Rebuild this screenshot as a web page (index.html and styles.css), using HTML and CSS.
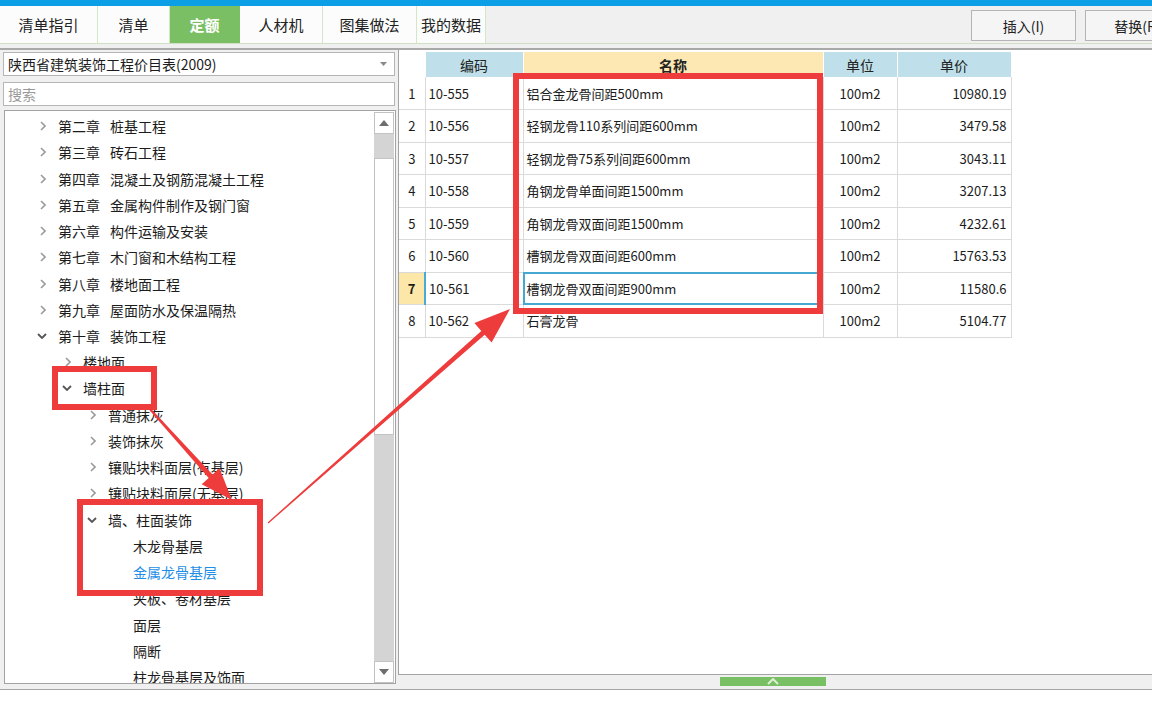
FILE: index.html
```html
<!DOCTYPE html>
<html lang="zh-CN">
<head>
<meta charset="utf-8">
<title>定额</title>
<link rel="stylesheet" href="styles.css">
</head>
<body>
<div class="app">
  <div class="topstrip"></div>
  <div class="tabbar">
    <div class="tabs">
      <div class="tab w1">清单指引</div>
      <div class="tab w2">清单</div>
      <div class="tab w3 active">定额</div>
      <div class="tab w4">人材机</div>
      <div class="tab w5">图集做法</div>
      <div class="tab w6">我的数据</div>
    </div>
    <div class="actions">
      <button class="btn">插入(I)</button>
      <button class="btn">替换(R)</button>
    </div>
  </div>
  <div class="sep"></div>
  <div class="main">
    <div class="left">
      <div class="select">
        <span class="select-text">陕西省建筑装饰工程价目表(2009)</span>
        <svg class="caret" width="7" height="4" viewBox="0 0 7 4"><polygon points="0,0 7,0 3.5,4" fill="#8a8a8a"/></svg>
      </div>
      <div class="search">搜索</div>
      <div class="tree">
        <div class="nodes">
          <div class="node l1"><span class="tw"><svg class="cc" width="6" height="10" viewBox="0 0 6 10"><polyline points="1,1 5,5 1,9"/></svg></span><span class="ch">第二章</span>桩基工程</div>
          <div class="node l1"><span class="tw"><svg class="cc" width="6" height="10" viewBox="0 0 6 10"><polyline points="1,1 5,5 1,9"/></svg></span><span class="ch">第三章</span>砖石工程</div>
          <div class="node l1"><span class="tw"><svg class="cc" width="6" height="10" viewBox="0 0 6 10"><polyline points="1,1 5,5 1,9"/></svg></span><span class="ch">第四章</span>混凝土及钢筋混凝土工程</div>
          <div class="node l1"><span class="tw"><svg class="cc" width="6" height="10" viewBox="0 0 6 10"><polyline points="1,1 5,5 1,9"/></svg></span><span class="ch">第五章</span>金属构件制作及钢门窗</div>
          <div class="node l1"><span class="tw"><svg class="cc" width="6" height="10" viewBox="0 0 6 10"><polyline points="1,1 5,5 1,9"/></svg></span><span class="ch">第六章</span>构件运输及安装</div>
          <div class="node l1"><span class="tw"><svg class="cc" width="6" height="10" viewBox="0 0 6 10"><polyline points="1,1 5,5 1,9"/></svg></span><span class="ch">第七章</span>木门窗和木结构工程</div>
          <div class="node l1"><span class="tw"><svg class="cc" width="6" height="10" viewBox="0 0 6 10"><polyline points="1,1 5,5 1,9"/></svg></span><span class="ch">第八章</span>楼地面工程</div>
          <div class="node l1"><span class="tw"><svg class="cc" width="6" height="10" viewBox="0 0 6 10"><polyline points="1,1 5,5 1,9"/></svg></span><span class="ch">第九章</span>屋面防水及保温隔热</div>
          <div class="node l1"><span class="tw"><svg class="ce" width="10" height="6" viewBox="0 0 10 6"><polyline points="1,1 5,5 9,1"/></svg></span><span class="ch">第十章</span>装饰工程</div>
          <div class="node l2"><span class="tw"><svg class="cc" width="6" height="10" viewBox="0 0 6 10"><polyline points="1,1 5,5 1,9"/></svg></span>楼地面</div>
          <div class="node l2"><span class="tw"><svg class="ce" width="10" height="6" viewBox="0 0 10 6"><polyline points="1,1 5,5 9,1"/></svg></span>墙柱面</div>
          <div class="node l3"><span class="tw"><svg class="cc" width="6" height="10" viewBox="0 0 6 10"><polyline points="1,1 5,5 1,9"/></svg></span>普通抹灰</div>
          <div class="node l3"><span class="tw"><svg class="cc" width="6" height="10" viewBox="0 0 6 10"><polyline points="1,1 5,5 1,9"/></svg></span>装饰抹灰</div>
          <div class="node l3"><span class="tw"><svg class="cc" width="6" height="10" viewBox="0 0 6 10"><polyline points="1,1 5,5 1,9"/></svg></span>镶贴块料面层(有基层)</div>
          <div class="node l3"><span class="tw"><svg class="cc" width="6" height="10" viewBox="0 0 6 10"><polyline points="1,1 5,5 1,9"/></svg></span>镶贴块料面层(无基层)</div>
          <div class="node l3"><span class="tw"><svg class="ce" width="10" height="6" viewBox="0 0 10 6"><polyline points="1,1 5,5 9,1"/></svg></span>墙、柱面装饰</div>
          <div class="node l4"><span class="tw"></span>木龙骨基层</div>
          <div class="node l4 sel"><span class="tw"></span>金属龙骨基层</div>
          <div class="node l4"><span class="tw"></span>夹板、卷材基层</div>
          <div class="node l4"><span class="tw"></span>面层</div>
          <div class="node l4"><span class="tw"></span>隔断</div>
          <div class="node l4"><span class="tw"></span>柱龙骨基层及饰面</div>
        </div>
        <div class="vscroll">
          <div class="sbtn"><svg width="10" height="6" viewBox="0 0 10 6"><polygon points="0,6 10,6 5,0" fill="#6e6e6e"/></svg></div>
          <div class="track t1"></div>
          <div class="thumb"></div>
          <div class="track t2"></div>
          <div class="sbtn"><svg width="10" height="6" viewBox="0 0 10 6"><polygon points="0,0 10,0 5,6" fill="#6e6e6e"/></svg></div>
        </div>
      </div>
    </div>
    <div class="right">
      <div class="gridwrap">
        <table class="grid">
          <colgroup><col class="c0"><col class="c1"><col class="c2"><col class="c3"><col class="c4"></colgroup>
          <thead>
            <tr><th class="hn"></th><th class="hb">编码</th><th class="hy">名称</th><th class="hb">单位</th><th class="hb">单价</th></tr>
          </thead>
          <tbody>
            <tr><td class="rn">1</td><td class="code">10-555</td><td class="name">铝合金龙骨间距500mm</td><td class="unit">100m2</td><td class="price">10980.19</td></tr>
            <tr><td class="rn">2</td><td class="code">10-556</td><td class="name">轻钢龙骨110系列间距600mm</td><td class="unit">100m2</td><td class="price">3479.58</td></tr>
            <tr><td class="rn">3</td><td class="code">10-557</td><td class="name">轻钢龙骨75系列间距600mm</td><td class="unit">100m2</td><td class="price">3043.11</td></tr>
            <tr><td class="rn">4</td><td class="code">10-558</td><td class="name">角钢龙骨单面间距1500mm</td><td class="unit">100m2</td><td class="price">3207.13</td></tr>
            <tr><td class="rn">5</td><td class="code">10-559</td><td class="name">角钢龙骨双面间距1500mm</td><td class="unit">100m2</td><td class="price">4232.61</td></tr>
            <tr><td class="rn">6</td><td class="code">10-560</td><td class="name">槽钢龙骨双面间距600mm</td><td class="unit">100m2</td><td class="price">15763.53</td></tr>
            <tr class="current"><td class="rn">7</td><td class="code">10-561</td><td class="name cursor">槽钢龙骨双面间距900mm</td><td class="unit">100m2</td><td class="price">11580.6</td></tr>
            <tr><td class="rn">8</td><td class="code">10-562</td><td class="name">石膏龙骨</td><td class="unit">100m2</td><td class="price">5104.77</td></tr>
          </tbody>
        </table>
      </div>
      <div class="handlebar">
        <div class="handle"><svg width="12" height="7" viewBox="0 0 12 7"><polyline points="1,6 6,1 11,6" fill="none" stroke="#dff0d6" stroke-width="2"/></svg></div>
      </div>
    </div>
  </div>
  <svg class="annot" width="1152" height="726" viewBox="0 0 1152 726">
    <g fill="none" stroke="#ee3b3b" stroke-width="6">
      <rect x="516" y="76" width="304" height="235"/>
      <rect x="55" y="369" width="99" height="38"/>
      <rect x="80" y="502" width="180" height="91"/>
    </g>
    <g fill="#ee3b3b">
      <polygon points="147.3,407.7 208.7,478.0 201.7,484.3 232,500 219.5,468.3 212.5,474.6 148.7,406.3"/>
      <polygon points="267.6,522.5 481.3,331.0 474.4,323.1 510,309 491.6,342.6 484.7,334.7 268.4,523.5"/>
    </g>
  </svg>
</div>
</body>
</html>
```

FILE: styles.css
```css
* { box-sizing: border-box; }
html, body { margin: 0; padding: 0; }
body {
  width: 1152px;
  height: 726px;
  overflow: hidden;
  background: #ffffff;
  font-family: "Noto Sans CJK SC", "Noto Sans", sans-serif;
  color: #1c1c1c;
}
.app { position: relative; width: 1152px; height: 726px; }

.topstrip { height: 6px; background: #0c9fe6; }

.tabbar {
  height: 38px;
  display: flex;
  background: #f0f0f0;
  border-bottom: 1px solid #cfe0c6;
  overflow: hidden;
}
.tabs { display: flex; height: 100%; }
.tab {
  height: 100%;
  display: flex;
  align-items: center;
  justify-content: center;
  font-size: 15px;
  background: #fcfcfc;
  border-right: 1px solid #d3e7c7;
  color: #222;
}
.w1 { width: 98px; }
.w2 { width: 72px; }
.w3 { width: 70px; }
.w4 { width: 83px; }
.w5 { width: 94px; }
.w6 { width: 69px; }
.tab.active { background: #7abf63; color: #ffffff; font-weight: bold; border-right-color: #7abf63; }

.actions {
  margin-left: auto;
  margin-right: -38px;
  display: flex;
  gap: 9px;
  padding-top: 4px;
}
.btn {
  width: 105px;
  height: 31px;
  border: 1px solid #b4b4b4;
  background: #f5f5f5;
  font-family: inherit;
  font-size: 14px;
  color: #222;
  padding: 0;
}

.sep {
  height: 6px;
  background: #f0f0f0;
  border-bottom: 2px solid #a9a9a9;
}

.main {
  height: 640px;
  display: flex;
  background: #f0f0f0;
  border-bottom: 1px solid #a6a6a6;
}

.left {
  width: 396px;
  padding: 2px 0 0 3px;
  display: flex;
  flex-direction: column;
}
.select {
  width: 392px;
  height: 24px;
  border: 1px solid #b5b5b5;
  background: #fff;
  display: flex;
  align-items: center;
  padding: 0 7px 0 4px;
  font-size: 14px;
}
.select-text { flex: 1; }
.search {
  width: 392px;
  height: 24px;
  margin-top: 6px;
  border: 1px solid #b5b5b5;
  background: #fff;
  font-size: 14px;
  color: #9a9a9a;
  padding-left: 4px;
  line-height: 22px;
}
.tree {
  width: 392px;
  height: 574px;
  margin-top: 4px;
  margin-left: 1px;
  border: 1px solid #a3a3a3;
  background: #fff;
  display: flex;
  overflow: hidden;
}
.nodes {
  flex: 1;
  padding-top: 2px;
  overflow: hidden;
}
.node {
  height: 26.24px;
  display: flex;
  align-items: center;
  font-size: 14px;
  white-space: nowrap;
  color: #1c1c1c;
}
.node.l1 { padding-left: 32px; }
.node.l2 { padding-left: 57px; }
.node.l3 { padding-left: 82px; }
.node.l4 { padding-left: 107px; }
.tw { width: 21px; display: inline-flex; align-items: center; }
.cc { margin-left: 3px; fill: none; stroke: #9b9b9b; stroke-width: 1.6; }
.ce { margin-left: 0; fill: none; stroke: #555; stroke-width: 1.8; }
.ch { margin-right: 10px; }
.node.sel { color: #1f8ee6; }

.vscroll {
  width: 21px;
  padding: 1px 1px 0 0;
  display: flex;
  flex-direction: column;
}
.sbtn {
  height: 22px;
  background: #fff;
  border: 1px solid #c3c3c3;
  display: flex;
  align-items: center;
  justify-content: center;
  flex-shrink: 0;
}
.track { background: #d4d4d4; }
.t1 { height: 24px; }
.thumb { height: 277px; background: #fff; border: 1px solid #c3c3c3; }
.t2 { flex: 1; }

.right {
  flex: 1;
  margin-left: 2px;
  display: flex;
  flex-direction: column;
}
.gridwrap {
  height: 625px;
  background: #fff;
  border-left: 1px solid #a3a3a3;
  border-bottom: 1px solid #a3a3a3;
  padding-top: 2px;
}
.grid {
  border-collapse: collapse;
  table-layout: fixed;
  width: 612px;
  font-size: 13px;
}
.c0 { width: 26px; }
.c1 { width: 98px; }
.c2 { width: 300px; }
.c3 { width: 74px; }
.c4 { width: 114px; }
.grid th {
  height: 25px;
  font-weight: normal;
  font-size: 14px;
  color: #222;
  border-right: 1px solid #fff;
  padding: 0;
}
.hn { background: #fff; }
.hb { background: #bfe0ea; }
.hy { background: #fde8b3; font-weight: bold !important; }
.grid td {
  height: 32.5px;
  border: 1px solid #dadada;
  padding: 0;
  white-space: nowrap;
  overflow: hidden;
}
.grid tbody tr:first-child td { border-top: none; }
.grid td.rn { text-align: center; border-left: none; }
.grid td.code { padding-left: 3px; }
.grid td.name { padding-left: 3px; }
.grid td.unit { text-align: center; }
.grid td.price { text-align: right; padding-right: 4px; }
.current td.rn { background: #fce7a8; font-weight: bold; border-right: 2px solid #4aa9d5; }
.grid td.cursor { outline: 2px solid #45a8d2; outline-offset: -2px; }

.handlebar {
  height: 14px;
  display: flex;
  justify-content: center;
  padding-top: 2px;
  padding-right: 4px;
}
.handle {
  width: 106px;
  height: 9px;
  background: #79bf63;
  display: flex;
  justify-content: center;
  align-items: flex-start;
  overflow: hidden;
}
.handle svg { margin-top: 1px; }

.annot {
  position: absolute;
  left: 0;
  top: 0;
  pointer-events: none;
}
```
